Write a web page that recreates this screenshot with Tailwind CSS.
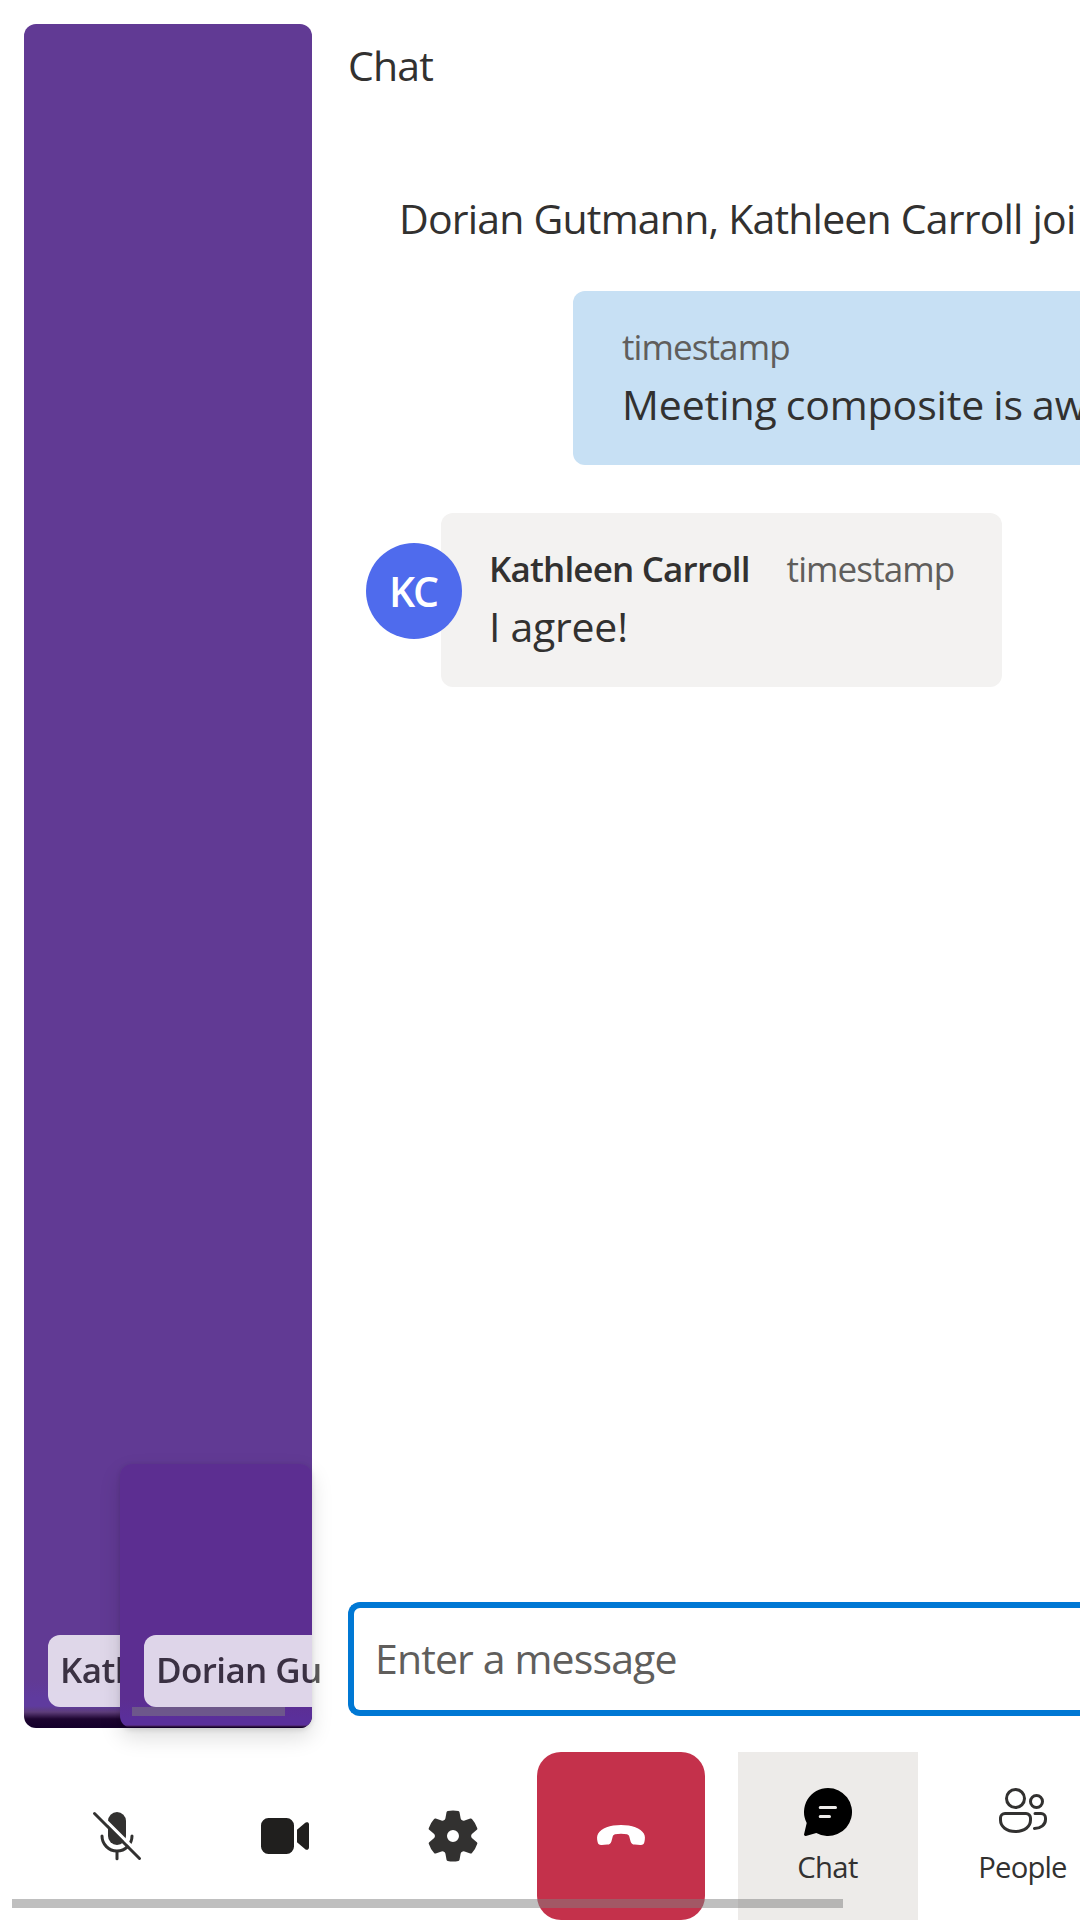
<!DOCTYPE html>
<html lang="en">
<head>
<meta charset="utf-8">
<title>Meeting</title>
<script src="https://cdn.jsdelivr.net/npm/@tailwindcss/browser@4"></script>
</head>
<body class="bg-white">
<div class="relative flex h-[1920px] w-[1080px] flex-col overflow-hidden bg-white font-['Open_Sans','Noto_Sans',sans-serif] text-[41px] leading-[60px] text-[#323130]">

  <div class="flex h-[1752px] shrink-0 gap-9 pt-6 pl-6">
    <!-- Video gallery -->
    <section class="relative h-[1704px] w-72 shrink-0 rounded-xl bg-[linear-gradient(to_bottom,#613a94_0px,#613a94_1655px,#5f3b9e_1674px,#5f3b9e_1682px,#5d3d79_1688px,#1d0530_1695px,#14002b_1704px)]">
      <div class="absolute top-[1611px] left-6 flex h-[72px] w-[120px] items-center overflow-hidden rounded-xl bg-white pb-[2px] pl-3 opacity-80">
        <span class="text-[35px] leading-[48px] font-semibold tracking-[-0.56px] whitespace-nowrap">Kath</span>
      </div>
      <!-- Local preview -->
      <div class="absolute top-[1440px] left-24 h-[264px] w-48 rounded-xl bg-[linear-gradient(to_bottom,#5c2e91_0px,#5c2e91_235px,#5a2f9b_255px,#5a2f9b_261px,#4a2560_262px,#14002b_263px)] shadow-[0_9.6px_21.6px_rgba(0,0,0,0.13),0_1.8px_5.4px_rgba(0,0,0,0.11)]">
        <div class="absolute top-[171px] left-6 flex h-[72px] w-[168px] items-center rounded-l-xl bg-white pb-[2px] pl-3 opacity-80">
          <span class="shrink-0 text-[35px] leading-[48px] font-semibold tracking-[-0.62px] whitespace-nowrap">Dorian Gu</span>
        </div>
        <div class="absolute top-[243px] left-3 h-[9px] w-[153px] bg-[#808080]/50"></div>
      </div>
    </section>

    <!-- Chat pane -->
    <section class="flex min-w-0 flex-1 flex-col overflow-hidden">
      <h1 class="pt-[11px] tracking-[-0.83px]">Chat</h1>
      <p class="mt-[93px] pl-[51px] tracking-[-0.8px] whitespace-nowrap">Dorian Gutmann, Kathleen Carroll joi</p>
      <div class="mt-[43px] ml-[225px] h-[174px] rounded-l-xl bg-[#c7e0f4] pt-8 pl-12 whitespace-nowrap">
        <div class="pl-px text-[35px] leading-[48px] tracking-[-0.9px] text-[#605e5c]">timestamp</div>
        <div class="mt-[3px] pl-px tracking-[-0.1px] [word-spacing:-1.5px]">Meeting composite is aw</div>
      </div>
      <div class="mt-12 flex pl-[18px]">
        <div class="z-10 mt-[30px] flex size-24 shrink-0 items-center justify-center rounded-full bg-[#4f6bed] pr-[2px] font-semibold tracking-[-2px] text-white">KC</div>
        <div class="-ml-[21px] h-[174px] w-[561px] rounded-xl bg-[#f3f2f1] pt-8 pl-12 whitespace-nowrap">
          <div class="flex gap-[37px] text-[35px] leading-[48px]">
            <span class="font-semibold tracking-[-0.82px]">Kathleen Carroll</span>
            <span class="tracking-[-0.9px] text-[#605e5c]">timestamp</span>
          </div>
          <div class="mt-[3px] tracking-[-0.26px]">I agree!</div>
        </div>
      </div>
      <div class="mt-auto mb-9 flex h-[114px] items-center rounded-l-xl border-6 border-r-0 border-[#0078d4] pb-[2px] pl-[21px]">
        <span class="tracking-[-0.86px] text-[#605e5c]">Enter a message</span>
      </div>
    </section>
  </div>

  <!-- Call controls -->
  <nav class="flex h-[168px] shrink-0 pl-[33px]">
    <button class="flex w-[168px] shrink-0 items-center justify-center">
      <svg class="size-[60px]" viewBox="0 0 20 20" fill="none" stroke="#323130" stroke-linecap="round">
        <mask id="cut" maskUnits="userSpaceOnUse" x="0" y="0" width="20" height="20">
          <rect width="20" height="20" fill="#fff" stroke="none"/>
          <path d="M2 .6 19 17.6" stroke="#000" stroke-width="1.1"/>
        </mask>
        <g mask="url(#cut)">
          <rect x="7" y="2" width="6" height="11" rx="3" fill="#323130" stroke="none"/>
          <path d="M5 10a5 5 0 0 0 10 0"/>
          <path d="M10 15.2v2.4"/>
        </g>
        <path d="M2.5 2.5l15 15"/>
      </svg>
    </button>
    <button class="flex w-[168px] shrink-0 items-center justify-center">
      <svg class="size-[60px]" viewBox="0 0 20 20" fill="#201f1e"><path d="M13 6.5A2.5 2.5 0 0 0 10.5 4h-6A2.5 2.5 0 0 0 2 6.5v7A2.5 2.5 0 0 0 4.5 16h6a2.5 2.5 0 0 0 2.5-2.5v-7Zm1 1.430v4.150l2.760 2.350A.75.75 0 0 0 18 13.860V6.140a.75.75 0 0 0-1.240-.57L14 7.930Z"/></svg>
    </button>
    <button class="flex w-[168px] shrink-0 items-center justify-center">
      <svg class="size-[60px]" viewBox="0 0 20 20" fill="#323130"><path d="M1.910 7.380A8.500 8.500 0 0 1 3.700 4.300a.5.5 0 0 1 .54-.13l1.920.68a1 1 0 0 0 1.320-.76l.36-2a.5.5 0 0 1 .4-.4 8.530 8.530 0 0 1 3.550 0c.2.040.35.2.38.4l.37 2a1 1 0 0 0 1.320.76l1.920-.68a.5.5 0 0 1 .54.13 8.500 8.500 0 0 1 1.780 3.080c.06.2 0 .4-.15.54l-1.560 1.320a1 1 0 0 0 0 1.520l1.560 1.320a.5.5 0 0 1 .15.54 8.500 8.500 0 0 1-1.780 3.080.5.5 0 0 1-.54.13l-1.920-.68a1 1 0 0 0-1.320.76l-.37 2a.5.5 0 0 1-.38.4 8.530 8.530 0 0 1-3.560 0 .5.5 0 0 1-.39-.4l-.36-2a1 1 0 0 0-1.320-.76l-1.920.68a.5.5 0 0 1-.54-.13 8.500 8.500 0 0 1-1.780-3.080.5.5 0 0 1 .15-.54l1.560-1.320a1 1 0 0 0 0-1.520L2.060 7.920a.5.5 0 0 1-.15-.54ZM10 12a2 2 0 1 0 0-4 2 2 0 0 0 0 4Z"/></svg>
    </button>
    <button class="flex w-[168px] shrink-0 items-center justify-center rounded-3xl bg-[#c4314b]">
      <svg class="size-[60px]" viewBox="0 0 20 20" fill="#fff"><path d="M10 6.330C13.600 6.330 16.600 7.400 17.600 9.200C18.100 10.100 18.050 11 17.800 12C17.600 12.800 17.200 13.080 16.400 13L14.600 12.850C13.800 12.800 13.400 12.500 13.200 11.800L12.800 10.300C12.650 9.800 12.500 9.600 12 9.450C10.800 9.150 9.200 9.150 8 9.450C7.500 9.600 7.350 9.800 7.200 10.300L6.800 11.800C6.600 12.500 6.200 12.800 5.400 12.850L3.600 13C2.800 13.080 2.400 12.800 2.200 12C1.950 11 1.900 10.100 2.400 9.200C3.400 7.400 6.400 6.330 10 6.330Z"/></svg>
    </button>
    <button class="ml-[33px] flex w-[180px] shrink-0 flex-col items-center bg-[#edebe9] pt-[30px]">
      <svg class="size-[60px]" viewBox="0 0 20 20"><path d="M10 2a8 8 0 1 1-3.900 14.980L2.620 17.990a.5.5 0 0 1-.6-.6L2.900 13.700A8 8 0 0 1 10 2Z"/><path d="M7.400 8.500h5.100M7.400 11.500h3.100" stroke="#edebe9" stroke-linecap="round"/></svg>
      <span class="mt-[4px] pr-px text-[29.25px] leading-[42px] tracking-[-0.64px]">Chat</span>
    </button>
    <button class="ml-[15px] flex w-[180px] shrink-0 flex-col items-center pt-[30px]">
      <svg class="size-[60px]" viewBox="0 0 20 20" fill="none" stroke="#323130" stroke-linecap="round"><circle cx="7.500" cy="5.500" r="3"/><circle cx="14.500" cy="6.500" r="2"/><path d="M4 10.500h7a1.500 1.500 0 0 1 1.500 1.500v.7c0 2.200-2 3.800-5 3.800s-5-1.600-5-3.800V12a1.500 1.500 0 0 1 1.500-1.500ZM14 10.500h2a1.500 1.500 0 0 1 1.500 1.500v.5c0 1.700-1.500 2.900-3.700 3"/></svg>
      <span class="mt-[4px] pr-px text-[29.25px] leading-[42px] tracking-[-0.82px]">People</span>
    </button>
  </nav>

  <!-- Horizontal scrollbar thumb -->
  <div class="absolute top-[1899px] left-3 h-[9px] w-[831px] bg-[#808080]/50"></div>
</div>
</body>
</html>
